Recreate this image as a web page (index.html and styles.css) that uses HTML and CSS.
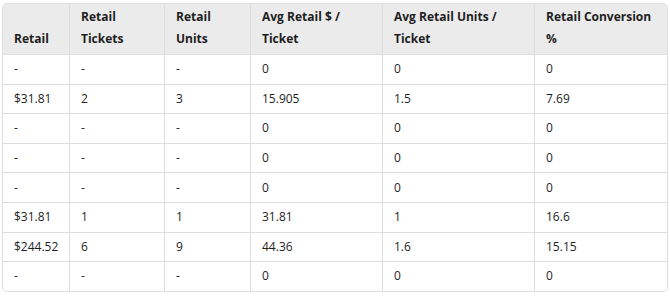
FILE: index.html
```html
<!DOCTYPE html>
<html lang="en-US">

<head>
    <meta charset="UTF-8">
    <meta name="viewport" content="width=device-width, initial-scale=1">
    <title>Retail Summary</title>
    <link rel="stylesheet" href="styles.css">
</head>

<body>
    <main class="main">
        <table class="report">
            <colgroup>
                <col class="c-retail">
                <col class="c-tickets">
                <col class="c-units">
                <col class="c-avg-dollar">
                <col class="c-avg-units">
                <col class="c-conv">
            </colgroup>
            <thead>
                <tr>
                    <th>Retail</th>
                    <th>Retail Tickets</th>
                    <th>Retail Units</th>
                    <th>Avg Retail $ / Ticket</th>
                    <th>Avg Retail Units / Ticket</th>
                    <th>Retail Conversion %</th>
                </tr>
            </thead>
            <tbody>
                <tr><td>-</td><td>-</td><td>-</td><td>0</td><td>0</td><td>0</td></tr>
                <tr><td>$31.81</td><td>2</td><td>3</td><td>15.905</td><td>1.5</td><td>7.69</td></tr>
                <tr><td>-</td><td>-</td><td>-</td><td>0</td><td>0</td><td>0</td></tr>
                <tr><td>-</td><td>-</td><td>-</td><td>0</td><td>0</td><td>0</td></tr>
                <tr><td>-</td><td>-</td><td>-</td><td>0</td><td>0</td><td>0</td></tr>
                <tr><td>$31.81</td><td>1</td><td>1</td><td>31.81</td><td>1</td><td>16.6</td></tr>
                <tr><td>$244.52</td><td>6</td><td>9</td><td>44.36</td><td>1.6</td><td>15.15</td></tr>
                <tr><td>-</td><td>-</td><td>-</td><td>0</td><td>0</td><td>0</td></tr>
            </tbody>
        </table>
    </main>
</body>

</html>
```

FILE: styles.css
```css
/* Layout */
body {
    margin: 0;
    background: #fff;
}

.main {
    padding: 3px 4px 0 2px;
}

/* Table */
.report {
    width: 664px;
    table-layout: fixed;
    border-collapse: separate;
    border-spacing: 0;
    border: 1px solid #dedede;
    border-radius: 5px;
    overflow: hidden;
    font-family: "Open Sans", "Noto Sans", sans-serif;
    font-size: 12px;
    color: #1e1e1e;
}

.c-retail { width: 66px; }
.c-tickets { width: 95px; }
.c-units { width: 86px; }
.c-avg-dollar { width: 132px; }
.c-avg-units { width: 152px; }
.c-conv { width: 133px; }

.report th,
.report td {
    text-align: left;
    padding: 0 11px;
    border-left: 1px solid #dedede;
    border-top: 1px solid #dedede;
    box-sizing: border-box;
}

.report th:first-child,
.report td:first-child {
    border-left: none;
}

.report th {
    background: #ebebeb;
    font-weight: 700;
    line-height: 22px;
    height: 50px;
    vertical-align: bottom;
    padding-bottom: 4px;
    border-top: none;
}

.report td {
    height: 29.6px;
    line-height: 18px;
    vertical-align: middle;
}
```
